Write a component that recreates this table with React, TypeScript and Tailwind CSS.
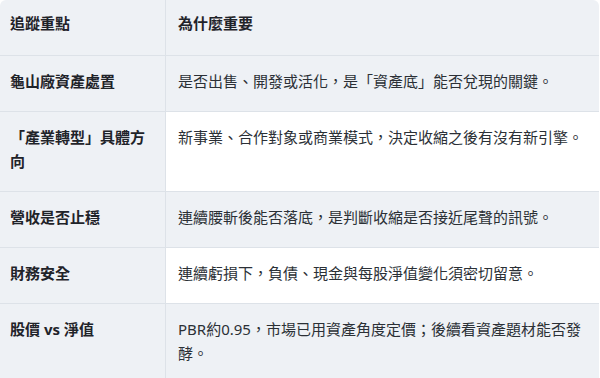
import React from 'react';

const rows: { key: string; why: string }[] = [
  { key: '龜山廠資產處置', why: '是否出售、開發或活化，是「資產底」能否兌現的關鍵。' },
  { key: '「產業轉型」具體方向', why: '新事業、合作對象或商業模式，決定收縮之後有沒有新引擎。' },
  { key: '營收是否止穩', why: '連續腰斬後能否落底，是判斷收縮是否接近尾聲的訊號。' },
  { key: '財務安全', why: '連續虧損下，負債、現金與每股淨值變化須密切留意。' },
  { key: '股價 vs 淨值', why: 'PBR約0.95，市場已用資產角度定價；後續看資產題材能否發酵。' },
];

const App: React.FC = () => {
  return (
    <div
      className="w-[600px] h-[378px] overflow-hidden bg-white"
      style={{ fontFamily: '"Noto Sans", "Noto Sans CJK TC", sans-serif' }}
    >
      <table className="w-[599px] border-separate border-spacing-0 text-[15px] leading-6">
        <thead>
          <tr>
            <th className="w-[166px] bg-[#eef1f5] rounded-tl-md border-r border-b border-[#dde2e8] pl-[10px] pr-3 pt-[11px] pb-[20px] text-left font-bold text-[#1f2329]">
              追蹤重點
            </th>
            <th className="bg-[#eef1f5] rounded-tr-md border-b border-[#dde2e8] pl-3 pr-3 pt-[11px] pb-[20px] text-left font-bold text-[#1f2329]">
              為什麼重要
            </th>
          </tr>
        </thead>
        <tbody>
          {rows.map((r, i) => {
            const striped = i % 2 === 0;
            return (
              <tr key={r.key}>
                <td className="bg-[#eef1f5] border-r border-b border-[#dde2e8] pl-[10px] pr-3 pt-[13px] pb-[18px] align-top font-bold text-[#1f2329]">
                  {r.key}
                </td>
                <td
                  className={
                    (striped ? 'bg-[#eef1f5] ' : 'bg-white ') +
                    'border-b border-[#dde2e8] pl-3 pr-3 pt-[13px] pb-[18px] align-top text-[#2b3036]'
                  }
                >
                  {r.why}
                </td>
              </tr>
            );
          })}
        </tbody>
      </table>
    </div>
  );
};

export default App;
